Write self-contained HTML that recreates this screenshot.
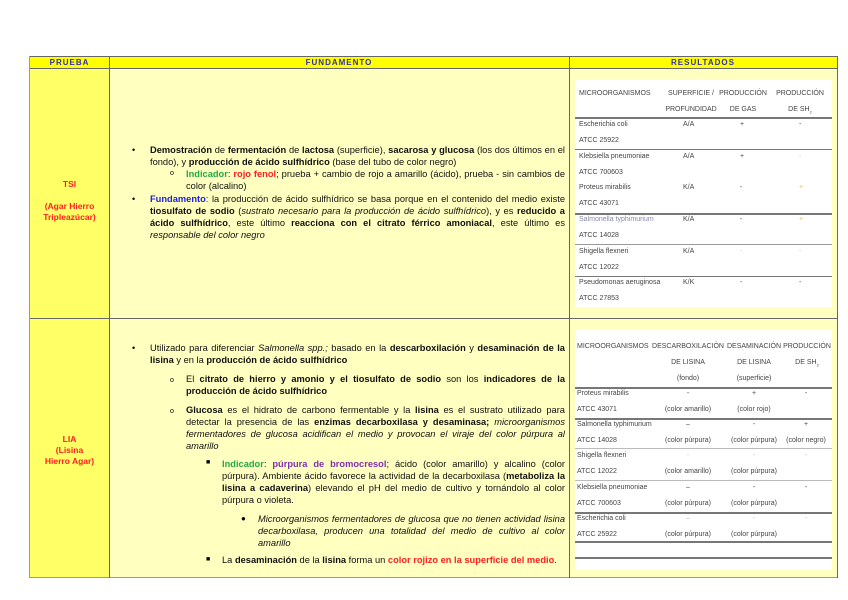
<!DOCTYPE html>
<html><head><meta charset="utf-8"><style>
*{margin:0;padding:0;box-sizing:border-box}
body{width:848px;height:600px;background:#fff;position:relative;font-family:"Liberation Sans",sans-serif;overflow:hidden}
.a{position:absolute}
.hd{background:#ffff00;color:#2e2eb8;font-weight:bold;font-size:8px;text-align:center;letter-spacing:1px;line-height:11px}
.c1{background:#ffff66}
.c2{background:#ffffc0}
.ln{background:#666}
.t{font-size:9.3px;line-height:12px;color:#111;text-align:justify}
.t b{font-weight:bold}
.g{color:#22aa44;font-weight:bold}
.r{color:#ff2020;font-weight:bold}
.bl{color:#2020dd;font-weight:bold}
.p{color:#8030b0;font-weight:bold}
.lab{color:#ff2020;font-weight:bold;font-size:8.5px;text-align:center;line-height:11px}
.box{background:#fff}
.tb{font-size:7px;color:#444;line-height:16px;white-space:nowrap}
.bul{position:absolute;font-size:9px}
</style></head><body>
<div class="a hd" style="left:30px;top:57px;width:79px;height:11px">PRUEBA</div>
<div class="a hd" style="left:109px;top:57px;width:460px;height:11px">FUNDAMENTO</div>
<div class="a hd" style="left:569px;top:57px;width:268px;height:11px">RESULTADOS</div>
<div class="a c1" style="left:30px;top:68px;width:79px;height:510px"></div>
<div class="a c2" style="left:109px;top:68px;width:728px;height:510px"></div>
<div class="a ln" style="left:30px;top:56px;width:808px;height:1px"></div>
<div class="a ln" style="left:30px;top:68px;width:808px;height:1px"></div>
<div class="a ln" style="left:30px;top:318px;width:808px;height:1px"></div>
<div class="a ln" style="left:30px;top:577px;width:808px;height:1px;background:#999"></div>
<div class="a ln" style="left:29px;top:56px;width:1px;height:522px;background:#999"></div>
<div class="a ln" style="left:109px;top:56px;width:1px;height:522px"></div>
<div class="a ln" style="left:569px;top:56px;width:1px;height:522px"></div>
<div class="a ln" style="left:837px;top:56px;width:1px;height:522px"></div>
<div class="a lab" style="left:30px;top:179px;width:79px">TSI<br><br>(Agar Hierro<br>Tripleazúcar)</div>
<div class="a lab" style="left:30px;top:434px;width:79px">LIA<br>(Lisina<br>Hierro Agar)</div>
<div class="bul" style="left:132px;top:145px">•</div>
<div class="a t" style="left:150px;top:144px;width:415px"><b>Demostración</b> de <b>fermentación</b> de <b>lactosa</b> (superficie), <b>sacarosa y glucosa</b> (los dos últimos en el fondo), y <b>producción de ácido sulfhídrico</b> (base del tubo de color negro)</div>
<div class="bul" style="left:170px;top:170px;font-size:7px">o</div>
<div class="a t" style="left:186px;top:168px;width:379px"><span class="g">Indicador</span>: <span class="r">rojo fenol</span>; prueba + cambio de rojo a amarillo (ácido), prueba - sin cambios de color (alcalino)</div>
<div class="bul" style="left:132px;top:194px">•</div>
<div class="a t" style="left:150px;top:193px;width:415px"><span class="bl">Fundamento</span>: la producción de ácido sulfhídrico se basa porque en el contenido del medio existe <b>tiosulfato de sodio</b> (<i>sustrato necesario para la producción de ácido sulfhídrico</i>), y es <b>reducido a ácido sulfhídrico</b>, este último <b>reacciona con el citrato férrico amoniacal</b>, este último es <i>responsable del color negro</i></div>
<div class="bul" style="left:132px;top:343px">•</div>
<div class="a t" style="left:150px;top:342px;width:415px">Utilizado para diferenciar <i>Salmonella spp.;</i> basado en la <b>descarboxilación</b> y <b>desaminación de la lisina</b> y en la <b>producción de ácido sulfhídrico</b></div>
<div class="bul" style="left:170px;top:377px;font-size:7px">o</div>
<div class="a t" style="left:186px;top:373px;width:379px">El <b>citrato de hierro y amonio y el tiosulfato de sodio</b> son los <b>indicadores de la producción de ácido sulfhídrico</b></div>
<div class="bul" style="left:170px;top:408px;font-size:7px">o</div>
<div class="a t" style="left:186px;top:404px;width:379px"><b>Glucosa</b> es el hidrato de carbono fermentable y la <b>lisina</b> es el sustrato utilizado para detectar la presencia de las <b>enzimas decarboxilasa y desaminasa;</b> <i>microorganismos fermentadores de glucosa acidifican el medio y provocan el viraje del color púrpura al amarillo</i></div>
<div class="bul" style="left:206px;top:459px;font-size:7px">■</div>
<div class="a t" style="left:222px;top:458px;width:343px"><span class="g">Indicador</span>: <span class="p">púrpura de bromocresol</span>; ácido (color amarillo) y alcalino (color púrpura). Ambiente ácido favorece la actividad de la decarboxilasa (<b>metaboliza la lisina a cadaverina</b>) elevando el pH del medio de cultivo y tornándolo al color púrpura o violeta.</div>
<div class="bul" style="left:241px;top:514px;font-size:8px">●</div>
<div class="a t" style="left:258px;top:513px;width:307px"><i>Microorganismos fermentadores de glucosa que no tienen actividad lisina decarboxilasa, producen una totalidad del medio de cultivo al color amarillo</i></div>
<div class="bul" style="left:206px;top:556px;font-size:7px">■</div>
<div class="a t" style="left:222px;top:554px;width:343px">La <b>desaminación</b> de la <b>lisina</b> forma un <span class="r">color rojizo en la superficie del medio</span>.</div>
<!-- box 1 -->
<div class="a box" style="left:575px;top:80px;width:257px;height:227px">
<div class="a tb" style="left:4px;top:6px">MICROORGANISMOS</div>
<div class="a tb" style="left:86px;top:6px;text-align:center;width:60px">SUPERFICIE /<br>PROFUNDIDAD</div>
<div class="a tb" style="left:142px;top:6px;text-align:center;width:52px">PRODUCCIÓN<br>DE GAS</div>
<div class="a tb" style="left:198px;top:6px;text-align:center;width:54px">PRODUCCIÓN<br>DE SH<sub style="font-size:4px">2</sub></div>
<div class="a" style="left:0;top:37px;width:257px;height:2px;background:#777"></div>
<div class="a tb" style="left:4px;top:37px">Escherichia coli<br>ATCC 25922</div>
<div class="a tb" style="left:108px;top:37px">A/A</div><div class="a tb" style="left:165px;top:37px">+</div><div class="a tb" style="left:224px;top:37px">-</div>
<div class="a" style="left:0;top:69px;width:257px;height:1px;background:#777"></div>
<div class="a tb" style="left:4px;top:69px">Klebsiella pneumoniae<br>ATCC 700603</div>
<div class="a tb" style="left:108px;top:69px">A/A</div><div class="a tb" style="left:165px;top:69px">+</div><div class="a tb" style="left:224px;top:69px;color:#bbb">-</div>
<div class="a tb" style="left:4px;top:100px">Proteus mirabilis<br>ATCC 43071</div>
<div class="a tb" style="left:108px;top:100px">K/A</div><div class="a tb" style="left:165px;top:100px">-</div><div class="a tb" style="left:224px;top:100px;color:#d8c060">+</div>
<div class="a" style="left:0;top:133px;width:257px;height:2px;background:#777"></div>
<div class="a tb" style="left:4px;top:132px;color:#8888aa">Salmonella typhimurium<br><span style="color:#444">ATCC 14028</span></div>
<div class="a tb" style="left:108px;top:132px">K/A</div><div class="a tb" style="left:165px;top:132px">-</div><div class="a tb" style="left:224px;top:132px;color:#d8c060">+</div>
<div class="a" style="left:0;top:164px;width:257px;height:1px;background:#999"></div>
<div class="a tb" style="left:4px;top:164px">Shigella flexneri<br>ATCC 12022</div>
<div class="a tb" style="left:108px;top:164px">K/A</div><div class="a tb" style="left:165px;top:164px;color:#ccc">-</div><div class="a tb" style="left:224px;top:164px;color:#ccc">-</div>
<div class="a" style="left:0;top:196px;width:257px;height:1px;background:#777"></div>
<div class="a tb" style="left:4px;top:195px">Pseudomonas aeruginosa<br>ATCC 27853</div>
<div class="a tb" style="left:108px;top:195px">K/K</div><div class="a tb" style="left:165px;top:195px">-</div><div class="a tb" style="left:224px;top:195px">-</div>
</div>
<!-- box 2 -->
<div class="a box" style="left:575px;top:330px;width:257px;height:240px">
<div class="a tb" style="left:2px;top:9px">MICROORGANISMOS</div>
<div class="a tb" style="left:74px;top:9px;text-align:center;width:78px">DESCARBOXILACIÓN<br>DE LISINA<br>(fondo)</div>
<div class="a tb" style="left:148px;top:9px;text-align:center;width:62px">DESAMINACIÓN<br>DE LISINA<br>(superficie)</div>
<div class="a tb" style="left:206px;top:9px;text-align:center;width:52px">PRODUCCIÓN<br>DE SH<sub style="font-size:4px">2</sub></div>
<div class="a" style="left:0;top:57px;width:257px;height:2px;background:#777"></div>
<div class="a tb" style="left:2px;top:56px">Proteus mirabilis<br>ATCC 43071</div>
<div class="a tb" style="left:84px;top:56px;text-align:center;width:58px">-<br>(color amarillo)</div>
<div class="a tb" style="left:150px;top:56px;text-align:center;width:58px">+<br>(color rojo)</div>
<div class="a tb" style="left:206px;top:56px;text-align:center;width:50px">-</div>
<div class="a" style="left:0;top:88px;width:257px;height:2px;background:#777"></div>
<div class="a tb" style="left:2px;top:87px">Salmonella typhimurium<br>ATCC 14028</div>
<div class="a tb" style="left:84px;top:87px;text-align:center;width:58px">–<br>(color púrpura)</div>
<div class="a tb" style="left:150px;top:87px;text-align:center;width:58px">-<br>(color púrpura)</div>
<div class="a tb" style="left:206px;top:87px;text-align:center;width:50px">+<br>(color negro)</div>
<div class="a" style="left:0;top:118px;width:257px;height:1px;background:#bbb"></div>
<div class="a tb" style="left:2px;top:118px">Shigella flexneri<br>ATCC 12022</div>
<div class="a tb" style="left:84px;top:118px;text-align:center;width:58px"><span style="color:#bbb">-</span><br>(color amarillo)</div>
<div class="a tb" style="left:150px;top:118px;text-align:center;width:58px"><span style="color:#bbb">-</span><br>(color púrpura)</div>
<div class="a tb" style="left:206px;top:118px;text-align:center;width:50px;color:#bbb">-</div>
<div class="a" style="left:0;top:150px;width:257px;height:1px;background:#bbb"></div>
<div class="a tb" style="left:2px;top:150px">Klebsiella pneumoniae<br>ATCC 700603</div>
<div class="a tb" style="left:84px;top:150px;text-align:center;width:58px">–<br>(color púrpura)</div>
<div class="a tb" style="left:150px;top:150px;text-align:center;width:58px">-<br>(color púrpura)</div>
<div class="a tb" style="left:206px;top:150px;text-align:center;width:50px">-</div>
<div class="a" style="left:0;top:182px;width:257px;height:2px;background:#777"></div>
<div class="a tb" style="left:2px;top:181px">Escherichia coli<br>ATCC 25922</div>
<div class="a tb" style="left:84px;top:181px;text-align:center;width:58px"><span style="color:#bbb">–</span><br>(color púrpura)</div>
<div class="a tb" style="left:150px;top:181px;text-align:center;width:58px"><span style="color:#bbb">-</span><br>(color púrpura)</div>
<div class="a tb" style="left:206px;top:181px;text-align:center;width:50px;color:#bbb">-</div>
<div class="a" style="left:0;top:211px;width:257px;height:2px;background:#777"></div>
<div class="a" style="left:0;top:227px;width:257px;height:2px;background:#777"></div>
</div>
</body></html>
